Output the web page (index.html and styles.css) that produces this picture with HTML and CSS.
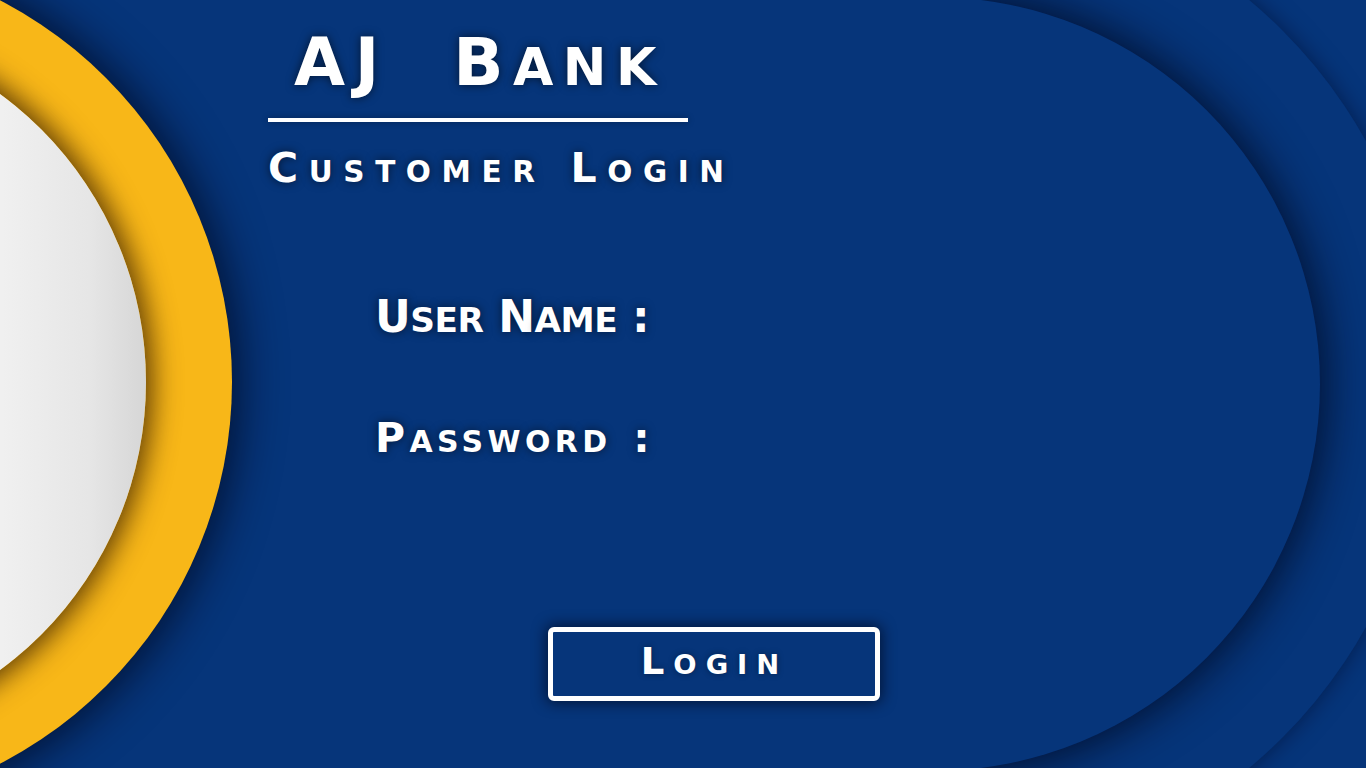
FILE: index.html
```html
<!DOCTYPE html>
<html lang="en">
<head>
<meta charset="utf-8">
<title>AJ Bank - Customer Login</title>
<link rel="stylesheet" href="styles.css">
</head>
<body>
<div class="stage">
  <div class="deco band"></div>
  <div class="deco pill"></div>
  <div class="deco ring"></div>
  <div class="deco disc"></div>

  <main class="content">
    <header class="brand">
      <h1 class="bank">AJ B<span class="sc">ank</span></h1>
      <div class="rule"></div>
      <h2 class="sub">C<span class="sc">ustomer</span> L<span class="sc">ogin</span></h2>
    </header>

    <form class="fields">
      <label class="field user">U<span class="sc">ser</span> N<span class="sc">ame</span> :</label>
      <label class="field pass">P<span class="sc">assword</span> :</label>
    </form>

    <button class="login" type="button">L<span class="sc">ogin</span></button>
  </main>
</div>
</body>
</html>
```

FILE: styles.css
```css
* { box-sizing: border-box; }

html, body {
  margin: 0;
  padding: 0;
  background: #06357a;
}

.stage {
  position: relative;
  width: 1366px;
  height: 768px;
  overflow: hidden;
  background: #06357a;
  font-family: "DejaVu Sans", Inter, sans-serif;
  font-weight: 700;
  color: #ffffff;
}

/* decorative background shapes */
.deco { position: absolute; }

.band {
  left: -1000px;
  top: -116px;
  width: 2429px;
  height: 1000px;
  border-radius: 0 500px 500px 0;
  background: #06357a;
  box-shadow: 0 0 22px rgba(0, 10, 40, 0.55);
}

.pill {
  left: -1000px;
  top: -3px;
  width: 2320px;
  height: 774px;
  border-radius: 0 387px 387px 0;
  background: #06357a;
  box-shadow: 0 0 45px 4px rgba(0, 8, 30, 0.85);
}

.ring {
  left: -628px;
  top: -48px;
  width: 860px;
  height: 860px;
  border-radius: 50%;
  background: #f8b718;
  box-shadow: 0 0 45px 6px rgba(0, 8, 30, 0.8);
}

.disc {
  left: -568px;
  top: 25px;
  width: 714px;
  height: 714px;
  border-radius: 50%;
  background: linear-gradient(to right, #f4f4f4 75%, #e6e6e6 92%, #d6d6d6 100%);
  box-shadow: 0 0 28px 6px rgba(50, 25, 0, 0.8);
}

/* content */
.content {
  position: relative;
  z-index: 1;
  display: flex;
  flex-direction: column;
  align-items: flex-start;
  padding: 30px 0 0 268px;
}

.sc {
  text-transform: uppercase;
  line-height: 0;
}

.brand {
  display: flex;
  flex-direction: column;
  align-items: flex-start;
}

.bank {
  margin: 0;
  width: 420px;
  padding-left: 4px;
  text-align: center;
  font-size: 66px;
  line-height: 66px;
  font-weight: 700;
  letter-spacing: 9.5px;
  word-spacing: 32px;
  white-space: nowrap;
  text-shadow: 0 0 10px rgba(0, 0, 0, 0.6);
}

.bank .sc { font-size: 0.79em; }

.rule {
  margin-top: 22px;
  width: 420px;
  height: 4px;
  background: #ffffff;
  box-shadow: 0 0 6px rgba(0, 0, 0, 0.35);
}

.sub {
  margin: 26px 0 0 0;
  font-size: 41px;
  line-height: 41px;
  font-weight: 700;
  letter-spacing: 10.6px;
  white-space: nowrap;
  text-shadow: 0 0 10px rgba(0, 0, 0, 0.6);
}

.sub .sc { font-size: 0.72em; }

.fields {
  display: flex;
  flex-direction: column;
  margin: 106px 0 0 107px;
}

.field {
  display: block;
  white-space: nowrap;
  text-shadow: 0 0 10px rgba(0, 0, 0, 0.6);
}

.user {
  font-size: 44px;
  line-height: 44px;
  letter-spacing: -0.5px;
}

.user .sc { font-size: 0.78em; }

.pass {
  margin-top: 79px;
  font-size: 41px;
  line-height: 41px;
  letter-spacing: 4.4px;
  word-spacing: 3px;
}

.pass .sc { font-size: 0.73em; }

.login {
  margin: 168px 0 0 280px;
  width: 332px;
  padding: 11px 0 16px 1px;
  border: 5px solid #ffffff;
  border-radius: 6px;
  background: #06357a;
  color: #ffffff;
  font-family: inherit;
  font-weight: 700;
  font-size: 37px;
  line-height: 37px;
  letter-spacing: 9px;
  text-align: center;
  box-shadow: 0 0 14px 2px rgba(0, 8, 30, 0.7);
  text-shadow: 0 0 6px rgba(0, 0, 0, 0.4);
  cursor: pointer;
}

.login .sc { font-size: 0.74em; }
```
